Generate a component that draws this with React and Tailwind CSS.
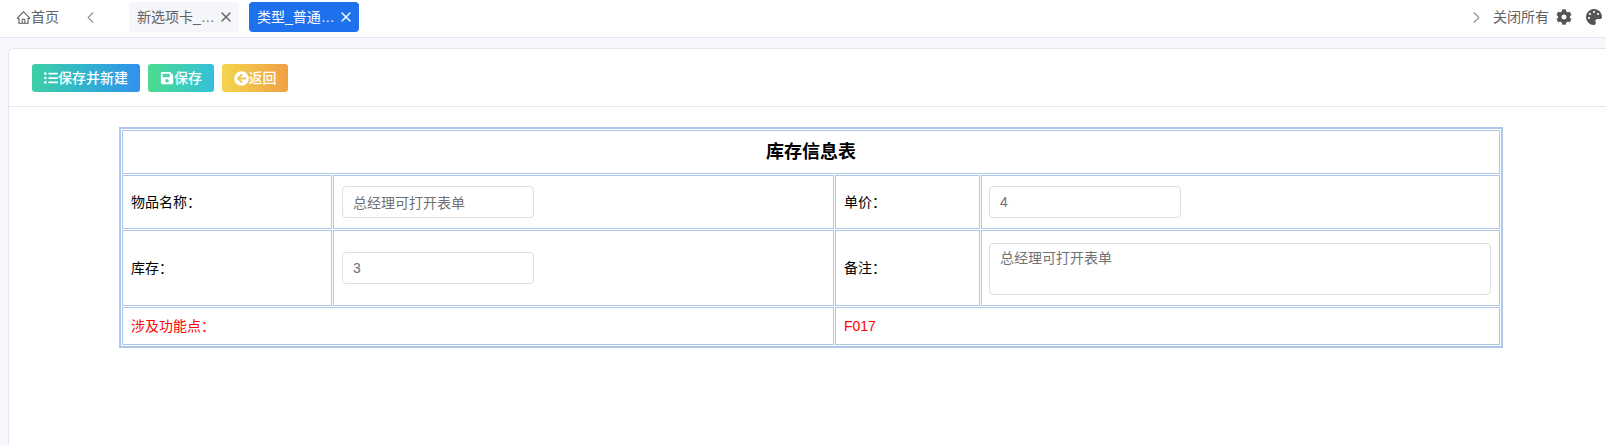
import { X, ChevronLeft, ChevronRight } from "lucide-react";
import { FaCog, FaPalette, FaListUl, FaSave, FaArrowCircleLeft } from "react-icons/fa";
import { AiOutlineHome } from "react-icons/ai";

const cell = "border border-[#adc8ea] align-middle px-2 text-[14px]";
const field =
  "block border border-[#dcdfe6] rounded-[4px] bg-white px-[10px] text-[14px] text-[#6f7175] outline-none";

function Tab({ title, active }) {
  return (
    <div
      className={
        "flex items-center w-[110px] h-[30px] rounded-[4px] pl-2 pr-[5px] text-[14px] " +
        (active ? "bg-[#1d71ed] text-white" : "bg-[#f4f6f9] text-[#606266]")
      }
    >
      <span className="flex-1 truncate">{title}</span>
      <X size={16} strokeWidth={2} className="shrink-0" />
    </div>
  );
}

function ToolButton({ icon, label, className }) {
  return (
    <button
      className={
        "flex items-center h-7 rounded-[3px] justify-center text-[14px] font-medium text-white " + className
      }
    >
      {icon}
      {label}
    </button>
  );
}

export default function App() {
  return (
    <div
      className="h-screen overflow-hidden flex flex-col bg-[#f5f7fb]"
      style={{ fontFamily: '"Liberation Sans", "Noto Sans CJK SC", sans-serif' }}
    >
      {/* top tabs */}
      <div className="h-[38px] shrink-0 flex items-start bg-white border-b border-[#e3e6f0] text-[#606266]">
        <div className="flex items-center h-[34px] pl-[16px] w-[129px] text-[14px]">
          <AiOutlineHome size={15} className="text-[#555]" />
          <span>首页</span>
          <ChevronLeft size={19} strokeWidth={1.5} className="ml-[22px] text-[#8f98a8]" />
        </div>
        <div className="flex gap-[10px] pt-[2px]">
          <Tab title="新选项卡_新选项卡" />
          <Tab title="类型_普通表单表单" active />
        </div>
        <div className="ml-auto flex items-center h-[34px] text-[14px]">
          <ChevronRight size={19} strokeWidth={1.5} className="text-[#8f98a8]" />
          <span className="ml-[7px] mr-[-1px]">关闭所有</span>
          <FaCog size={16} className="ml-[8px] text-[#555]" />
          <FaPalette size={16} className="ml-[14px] mr-[4px] text-[#555]" />
        </div>
      </div>

      {/* card */}
      <div className="flex-1 mt-[10px] ml-2 bg-white border-t border-l border-[#e3e6f0] rounded-tl-[6px]">
        <div className="h-[58px] flex items-start gap-2 pt-[15px] pl-[23px] border-b border-[#e3e6f0]">
          <ToolButton
            icon={<FaListUl size={14} />}
            label="保存并新建"
            className="w-[108px] bg-gradient-to-r from-[#3fcfa6] to-[#3390ee]"
          />
          <ToolButton
            icon={<FaSave size={14} />}
            label="保存"
            className="w-[66px] bg-gradient-to-r from-[#4cdc8e] to-[#36bfd8]"
          />
          <ToolButton
            icon={<FaArrowCircleLeft size={15} />}
            label="返回"
            className="w-[66px] bg-gradient-to-r from-[#f2d54c] to-[#f0a044]"
          />
        </div>

        <div className="pt-[20px] pl-[110px]">
          <table className="table-fixed w-[1384px] border-separate border-spacing-[1px] border-2 border-[#adc8ea] bg-white">
            <colgroup>
              <col className="w-[210px]" />
              <col className="w-[501px]" />
              <col className="w-[145px]" />
              <col />
            </colgroup>
            <tbody>
              <tr className="h-[44px]">
                <td colSpan={4} className={cell + " text-center !text-[18px] font-bold text-black"}>
                  库存信息表
                </td>
              </tr>
              <tr className="h-[54px]">
                <td className={cell + " text-black"}>物品名称：</td>
                <td className={cell + " pl-[8px]"}>
                  <input readOnly value="总经理可打开表单" className={field + " w-[192px] h-8"} />
                </td>
                <td className={cell + " text-black"}>单价：</td>
                <td className={cell + " !pl-[7px]"}>
                  <input readOnly value="4" className={field + " w-[192px] h-8"} />
                </td>
              </tr>
              <tr className="h-[76px]">
                <td className={cell + " text-black"}>库存：</td>
                <td className={cell + " pl-[8px]"}>
                  <input readOnly value="3" className={field + " w-[192px] h-8"} />
                </td>
                <td className={cell + " text-black"}>备注：</td>
                <td className={cell + " !pl-[7px] pt-[2px]"}>
                  <textarea
                    readOnly
                    value="总经理可打开表单"
                    className={field + " w-[502px] h-[52px] pt-[4px] pb-[5px] resize-none"}
                  />
                </td>
              </tr>
              <tr className="h-[38px]">
                <td colSpan={2} className={cell + " text-[#ff0000]"}>涉及功能点：</td>
                <td colSpan={2} className={cell + " text-[#ff0000]"}>F017</td>
              </tr>
            </tbody>
          </table>
        </div>
      </div>
    </div>
  );
}
